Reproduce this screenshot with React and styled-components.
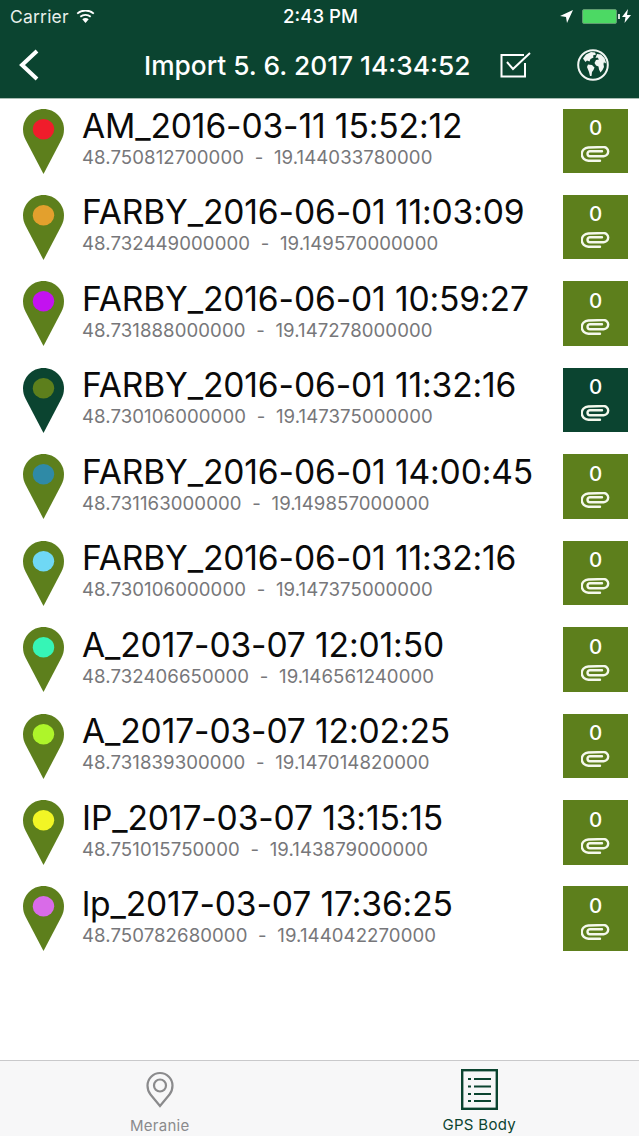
import React from "react";
import styled, { createGlobalStyle } from "styled-components";

const Global = createGlobalStyle`
  html, body { margin: 0; padding: 0; background: #fff; }
  body { font-family: Inter, "Liberation Sans", sans-serif; -webkit-font-smoothing: antialiased; }
`;

const Screen = styled.div`
  width: 639px; height: 1136px; display: flex; flex-direction: column; overflow: hidden; background: #fff;
`;
const Header = styled.header`
  height: 99px; flex: none; box-sizing: border-box; background: #0b4430; color: #fff; border-bottom: 1px solid #a9bdb3; display: flex; flex-direction: column;
`;
const StatusBar = styled.div`
  height: 32px; flex: none; display: grid; grid-template-columns: 1fr auto 1fr; align-items: center; padding: 0 8px 0 10px; font-size: 17.5px; color: #e8efeb;
`;
const StatusLeft = styled.div`
  display: flex; align-items: center; gap: 7px; letter-spacing: 0.2px;
`;
const Clock = styled.div`
  font-weight: 500; color: #fff; font-size: 18.6px;
`;
const StatusRight = styled.div`
  display: flex; align-items: center; justify-content: flex-end; gap: 9px;
`;
const Battery = styled.div`
  display: flex; align-items: center; gap: 1px;
`;
const BatteryBody = styled.div`
  width: 35px; height: 15px; background: #4cd964; border-radius: 2px; border: 1px solid #5f9b70; box-sizing: border-box;
`;
const BatteryCap = styled.div`
  width: 2px; height: 5px; background: #d4dfd9;
`;
const NavBar = styled.div`
  flex: 1; display: flex; align-items: center; padding: 0 0 0 17px;
`;
const Back = styled.div`
  width: 127px; display: flex; align-items: center; flex: none;
`;
const Title = styled.div`
  width: 327px; font-size: 26.3px; font-weight: 500; white-space: nowrap; flex: none;
`;
const NavIcons = styled.div`
  display: flex; align-items: center; margin-left: 29px; gap: 46px;
`;
const List = styled.main`
  flex: 1; display: flex; flex-direction: column; min-height: 0;
`;
const Row = styled.div`
  height: 86.45px; flex: none; box-sizing: border-box; display: flex; align-items: flex-start; padding: 9.5px 11px 0 23px;
`;
const PinWrap = styled.div`
  width: 41px; height: 65px; flex: none;
`;
const Texts = styled.div`
  flex: 1; min-width: 0; margin-left: 18px; display: flex; flex-direction: column;
`;
const Name = styled.div`
  font-size: 33.6px; line-height: 38px; color: #0a0a0a; white-space: nowrap; margin-top: -1.5px; letter-spacing: -0.12px;
`;
const Coords = styled.div`
  font-size: 18.6px; line-height: 22px; color: #77777a; white-space: pre; margin-top: 1px; letter-spacing: 0.08px;
`;
const Badge = styled.div`
  width: 65px; height: 64.5px; flex: none; background: ${(p) => (p.$active ? "#0b4430" : "#5d7f1c")}; color: #fff; display: flex; flex-direction: column; align-items: center; padding-top: 8.5px; box-sizing: border-box; font-size: 20.5px; font-weight: 500; line-height: 22px; gap: 7px;
`;
const TabBar = styled.nav`
  height: 76px; flex: none; box-sizing: border-box; border-top: 1px solid #c9c9cb; background: #f7f7f8; display: flex;
`;
const Tab = styled.div`
  width: 319.5px; display: flex; flex-direction: column; align-items: center; padding-top: ${(p) => (p.$active ? "8px" : "10px")}; box-sizing: border-box; color: ${(p) => (p.$active ? "#0b4430" : "#8a8a8c")}; font-size: 15px; letter-spacing: 0.3px;
`;
const TabLabel = styled.div`
  margin-top: ${(p) => (p.$active ? "6px" : "9px")}; line-height: 18px;
`;

const Pin = ({ body, dot }) => (
  <svg width="41" height="65" viewBox="0 0 41 65">
    <path d="M20.5 0C9.2 0 0 9.1 0 20.4c0 4 1 7.2 2.7 10.6L20.5 65l17.8-34C40 27.6 41 24.4 41 20.4 41 9.1 31.8 0 20.5 0z" fill={body} />
    <ellipse cx="20.5" cy="20.3" rx="10.7" ry="10.3" fill={dot} />
  </svg>
);

const Clip = () => (
  <svg width="29" height="16" viewBox="0 0 29 16" fill="none" stroke="#f4f8ec" strokeWidth="2.4" strokeLinecap="round" strokeLinejoin="round">
    <path d="M19 14.700H7.500a6.600 6.600 0 0 1-.3-13.200L22.500 1a4.600 4.600 0 0 1 .2 9.200H9a2.500 2.500 0 0 1 0-5h12" />
  </svg>
);

const Wifi = () => (
  <svg width="19" height="13" viewBox="0 0 19 13">
    <path d="M9.500 13L6.300 9.300a5 5 0 0 1 6.400 0z" fill="#fff" />
    <path d="M4.300 6.800a8 8 0 0 1 10.400 0" fill="none" stroke="#fff" strokeWidth="1.800" />
    <path d="M1.200 3.600a12.600 12.600 0 0 1 16.600 0" fill="none" stroke="#fff" strokeWidth="1.800" />
  </svg>
);

const Globe = () => (
  <svg width="32" height="32" viewBox="0 0 32 32">
    <circle cx="16" cy="16" r="14.800" fill="#0b4430" stroke="#f2f6f3" strokeWidth="2" />
    <path d="M6 9.500l3-4 5-2.500 4 .5 1 2-3 1 .5 2-3 1.500-1 2.500-2.500-1-1.500 1.500-1.500-2z" fill="#f2f6f3" />
    <path d="M20 5l4 .5 3.500 3.500 1.500 4.500-1 1-1-1.500-.5 2 .5 3-1.500 3-2 2.500-1.500-3-.500-3-2.500-1-1.500-2.500 1.500-3 3-.5-1.500-2-2 .5z" fill="#f2f6f3" />
    <path d="M11 15.500l4 .5 2.500 2.500-1 2.500-1.500 2-.5 4-1.500 0-1-4-1-2.500-1-2.500z" fill="#f2f6f3" />
  </svg>
);

const data = [
  ["AM_2016-03-11 15:52:12", "48.750812700000", "19.144033780000", "#f01c2b"],
  ["FARBY_2016-06-01 11:03:09", "48.732449000000", "19.149570000000", "#e3a02d"],
  ["FARBY_2016-06-01 10:59:27", "48.731888000000", "19.147278000000", "#c312f0"],
  ["FARBY_2016-06-01 11:32:16", "48.730106000000", "19.147375000000", "#5d7f1c", true],
  ["FARBY_2016-06-01 14:00:45", "48.731163000000", "19.149857000000", "#2f8aa6"],
  ["FARBY_2016-06-01 11:32:16", "48.730106000000", "19.147375000000", "#6fd8f5"],
  ["A_2017-03-07 12:01:50", "48.732406650000", "19.146561240000", "#36f5b6"],
  ["A_2017-03-07 12:02:25", "48.731839300000", "19.147014820000", "#aef52a"],
  ["IP_2017-03-07 13:15:15", "48.751015750000", "19.143879000000", "#f2f525"],
  ["lp_2017-03-07 17:36:25", "48.750782680000", "19.144042270000", "#d96be8"],
];

export default function App() {
  return (
    <Screen>
      <Global />
      <Header>
        <StatusBar>
          <StatusLeft>Carrier <Wifi /></StatusLeft>
          <Clock>2:43 PM</Clock>
          <StatusRight>
            <svg width="13" height="13" viewBox="0 0 13 13" fill="#fff"><path d="M13 0L0 6l6 1 1 6z" /></svg>
            <Battery>
              <BatteryBody />
              <BatteryCap />
            </Battery>
            <svg width="9" height="14" viewBox="0 0 9 14" fill="#fff" style={{ marginLeft: -7 }}><path d="M6 0L0 8h3.500L2.500 14 9 6H5z" /></svg>
          </StatusRight>
        </StatusBar>
        <NavBar>
          <Back>
            <svg width="23" height="34" viewBox="0 0 23 34" fill="none" stroke="#fff" strokeWidth="4"><path d="M20 3L5 17l15 14" /></svg>
          </Back>
          <Title>Import 5. 6. 2017 14:34:52</Title>
          <NavIcons>
            <svg width="31" height="26" viewBox="0 0 31 26" fill="none" stroke="#fff" strokeWidth="2"><path d="M25 11v13.500H1.500V3H24" /><path d="M7 10l6 7L30 1" /></svg>
            <Globe />
          </NavIcons>
        </NavBar>
      </Header>
      <List>
        {data.map(([name, lat, lon, dot, active], i) => (
          <Row key={i}>
            <PinWrap><Pin body={active ? "#0b4430" : "#5d7f1c"} dot={dot} /></PinWrap>
            <Texts>
              <Name>{name}</Name>
              <Coords>{lat}  -  {lon}</Coords>
            </Texts>
            <Badge $active={active}>
              0
              <Clip />
            </Badge>
          </Row>
        ))}
      </List>
      <TabBar>
        <Tab>
          <svg width="28" height="37" viewBox="0 0 28 37" fill="none" stroke="#8a8a8c" strokeWidth="2.200">
            <path d="M14 35L4.500 23.500C2.500 21 1.500 18 1.500 14.500a12.500 12.500 0 0 1 25 0c0 3.500-1 6.500-3 9z" />
            <circle cx="14" cy="14.500" r="6" />
          </svg>
          <TabLabel>Meranie</TabLabel>
        </Tab>
        <Tab $active>
          <svg width="37" height="41" viewBox="0 0 37 41" fill="none" stroke="#0b4430">
            <rect x="1.200" y="1.200" width="34.600" height="38.600" strokeWidth="2.400" />
            <path d="M13 10h17M13 17.500h17M13 25h17M13 32h17" strokeWidth="2" />
            <path d="M7 10h3M7 17.500h3M7 25h3M7 32h3" strokeWidth="2.200" />
          </svg>
          <TabLabel $active>GPS Body</TabLabel>
        </Tab>
      </TabBar>
    </Screen>
  );
}
